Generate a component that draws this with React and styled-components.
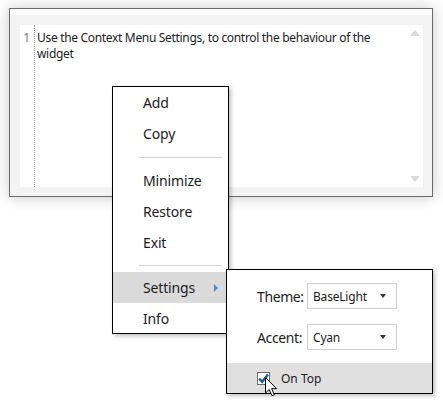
import React from "react";
import styled, { createGlobalStyle } from "styled-components";

const Global = createGlobalStyle`
  html, body { margin: 0; padding: 0; background: #ffffff; }
  body { font-family: "Noto Sans", "Open Sans", sans-serif; color: #1b1b1b; }
`;

const Stage = styled.div`
  position: relative;
  width: 443px;
  height: 405px;
  overflow: hidden;
  padding: 8px 0 0 9px;
  box-sizing: border-box;
`;

const Window = styled.div`
  width: 424px;
  height: 189px;
  box-sizing: border-box;
  border: 1px solid #6a6a6a;
  background: #f3f3f3;
  box-shadow: 0 0 14px rgba(0, 0, 0, 0.22);
  display: flex;
  flex-direction: column;
`;

const TopStrip = styled.div`
  height: 6px;
  background: #ffffff;
`;

const Body = styled.div`
  flex: 1;
  padding: 10px 9px 9px 10px;
  display: flex;
`;

const Editor = styled.div`
  flex: 1;
  background: #ffffff;
  display: flex;
`;

const Gutter = styled.div`
  width: 15px;
  border-right: 1px dotted #a8a8a8;
  box-sizing: border-box;
  padding: 5px 4px 0 0;
  text-align: right;
  font-size: 12px;
  line-height: 16px;
  color: #7a7a7a;
`;

const Text = styled.div`
  flex: 1;
  padding: 5px 0 0 2px;
  font-size: 12px;
  letter-spacing: -0.32px;
  line-height: 16px;
  color: #1b1b1b;
`;

const ScrollBar = styled.div`
  width: 17px;
  display: flex;
  flex-direction: column;
  justify-content: space-between;
  align-items: center;
  padding: 5px 0 5px;
`;

const Arrow = styled.div`
  width: 0;
  height: 0;
  border-left: 5.5px solid transparent;
  border-right: 5.5px solid transparent;
  ${(p) =>
    p.$down
      ? "border-top: 6px solid #dadada;"
      : "border-bottom: 6px solid #dadada;"}
`;

const Menu = styled.div`
  position: absolute;
  left: 112px;
  top: 86px;
  width: 117px;
  box-sizing: border-box;
  border: 1px solid #000000;
  background: #ffffff;
  box-shadow: 2px 2px 4px rgba(0, 0, 0, 0.25);
  display: flex;
  flex-direction: column;
`;

const Item = styled.div`
  position: relative;
  height: ${(p) => p.$h || 31}px;
  display: flex;
  align-items: center;
  padding-left: 30px;
  font-size: 14px;
  letter-spacing: -0.15px;
  color: #1b1b1b;
  background: ${(p) => (p.$active ? "#dadada" : "transparent")};
`;

const SubArrow = styled.span`
  position: absolute;
  right: 10px;
  top: 12px;
  width: 0;
  height: 0;
  border-top: 4px solid transparent;
  border-bottom: 4px solid transparent;
  border-left: 4px solid #3f8fe0;
`;

const Separator = styled.div`
  height: ${(p) => p.$h}px;
  display: flex;
  align-items: center;
  padding: 0 6px 0 26px;
  &::after {
    content: "";
    flex: 1;
    height: 1px;
    background: #d4d4d4;
  }
`;

const SubMenu = styled.div`
  position: absolute;
  left: 226px;
  top: 269px;
  width: 207px;
  height: 125px;
  box-sizing: border-box;
  border: 1px solid #000000;
  background: #ffffff;
  box-shadow: 2px 2px 4px rgba(0, 0, 0, 0.25);
  display: flex;
  flex-direction: column;
`;

const Fields = styled.div`
  display: grid;
  grid-template-columns: 45px 90px;
  column-gap: 5px;
  row-gap: 15px;
  padding: 13px 0 0 30px;
  align-items: center;
`;

const Label = styled.div`
  font-size: 14px;
  letter-spacing: -0.4px;
  text-align: right;
  color: #1b1b1b;
  white-space: nowrap;
`;

const Combo = styled.div`
  height: 26px;
  box-sizing: border-box;
  border: 1px solid #cfcfcf;
  display: flex;
  align-items: center;
  justify-content: space-between;
  padding: 0 10px 0 5px;
  font-size: 12px;
  letter-spacing: -0.2px;
  color: #1b1b1b;
  &::after {
    content: "";
    width: 0;
    height: 0;
    border-left: 3.5px solid transparent;
    border-right: 3.5px solid transparent;
    border-top: 4px solid #333333;
  }
`;

const CheckRow = styled.div`
  margin-top: auto;
  height: 30px;
  background: #e0e0e0;
  display: flex;
  align-items: center;
  padding-left: 30px;
  gap: 11px;
  font-size: 12px;
  color: #1b1b1b;
`;

const Box = styled.div`
  width: 13px;
  height: 13px;
  box-sizing: border-box;
  border: 1px solid #6b6b6b;
  background: #ffffff;
  display: flex;
  align-items: center;
  justify-content: center;
`;

const Cursor = styled.svg`
  position: absolute;
  left: 265px;
  top: 377px;
`;

export default function App() {
  return (
    <>
      <Global />
      <Stage>
        <Window>
          <TopStrip />
          <Body>
            <Editor>
              <Gutter>1</Gutter>
              <Text>
                Use the Context Menu Settings, to control the behaviour of the
                widget
              </Text>
              <ScrollBar>
                <Arrow />
                <Arrow $down />
              </ScrollBar>
            </Editor>
          </Body>
        </Window>

        <Menu>
          <Item>Add</Item>
          <Item>Copy</Item>
          <Separator $h={16} />
          <Item>Minimize</Item>
          <Item>Restore</Item>
          <Item>Exit</Item>
          <Separator $h={14} />
          <Item $active>
            Settings
            <SubArrow />
          </Item>
          <Item $h={30}>Info</Item>
        </Menu>

        <SubMenu>
          <Fields>
            <Label>Theme:</Label>
            <Combo>BaseLight</Combo>
            <Label>Accent:</Label>
            <Combo>Cyan</Combo>
          </Fields>
          <CheckRow>
            <Box>
              <svg width="11" height="11" viewBox="0 0 11 11">
                <path
                  d="M1.2 5.6 L4.2 8.8 L10 1.5"
                  fill="none"
                  stroke="#1f5f9e"
                  strokeWidth="2.4"
                />
              </svg>
            </Box>
            On Top
          </CheckRow>
        </SubMenu>

        <Cursor width="13" height="20" viewBox="0 0 13 20">
          <path
            d="M0.5 0.5 V16 L4.2 12.5 L7 18.8 L9.3 17.8 L6.6 11.6 H11.5 Z"
            fill="#ffffff"
            stroke="#000000"
            strokeWidth="1"
            strokeLinejoin="miter"
          />
        </Cursor>
      </Stage>
    </>
  );
}
